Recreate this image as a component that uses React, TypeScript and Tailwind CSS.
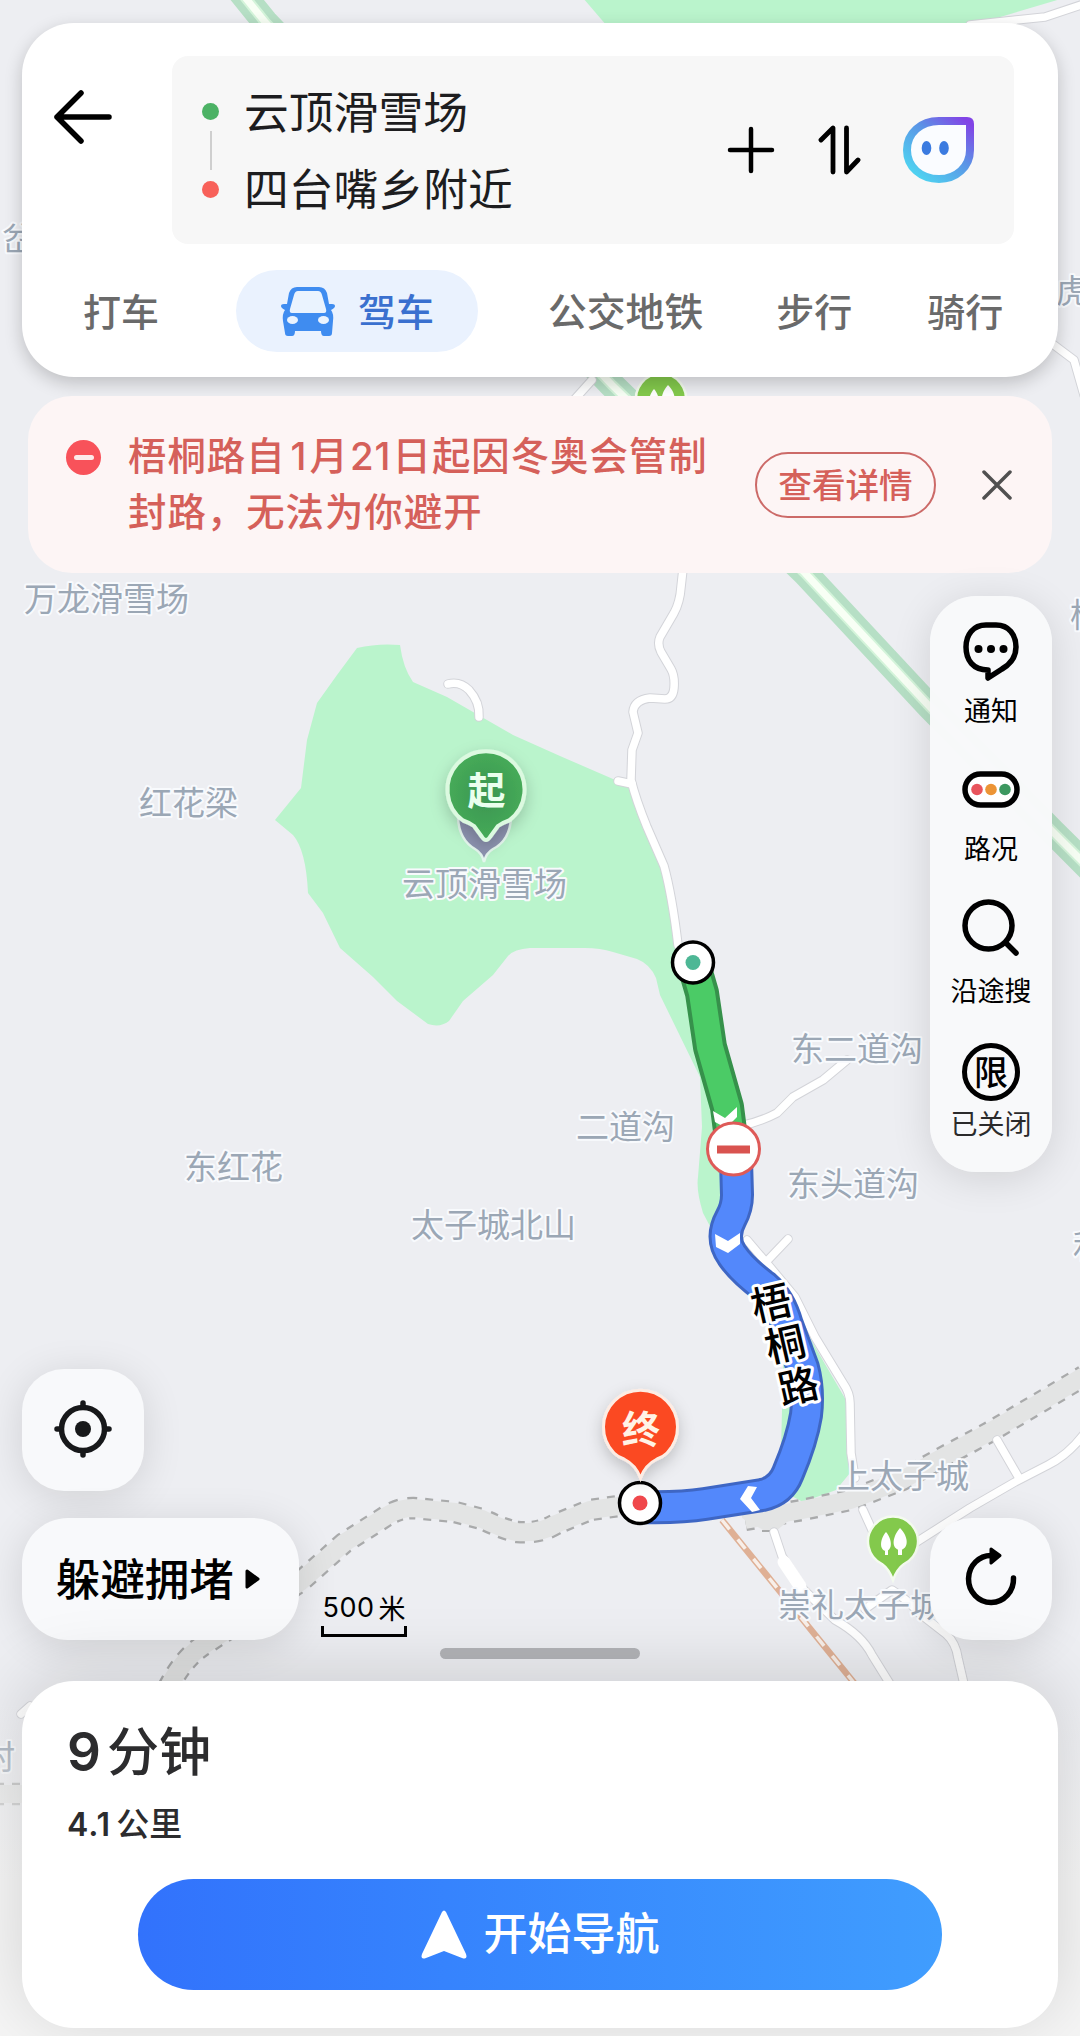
const mapLabels = [
  { text: "岔", x: 2, y: 251 },
  { text: "虎", x: 1056, y: 303 },
  { text: "万龙滑雪场", x: 24, y: 611 },
  { text: "梧", x: 1070, y: 627 },
  { text: "红花梁", x: 139, y: 815 },
  { text: "云顶滑雪场", x: 402, y: 896 },
  { text: "东二道沟", x: 791, y: 1061 },
  { text: "二道沟", x: 576, y: 1139 },
  { text: "东红花", x: 184, y: 1179 },
  { text: "东头道沟", x: 787, y: 1196 },
  { text: "太子城北山", x: 411, y: 1237 },
  { text: "利", x: 1073, y: 1258 },
  { text: "上太子城", x: 837, y: 1488 },
  { text: "崇礼太子城", x: 778, y: 1617 },
  { text: "村", x: -18, y: 1769 },
]

const roads = [
  "M684 560 L681 587 Q680 602 674 613 L660 637 Q657 644 661 652 L671 669 Q675 676 674 688 Q673 699 665 699 L650 698 Q634 700 633 712 L638 733 L632 750 L631 780 Q636 800 647 827 L664 866 Q672 895 678 945",
  "M448 684 Q460 681 469 690 Q480 702 479 717",
  "M618 781 L632 784",
  "M847 1060 L823 1080 L793 1097 L777 1113 Q760 1122 740 1126",
  "M747 1240 L770 1267 L795 1297 L815 1337 L843 1383 Q850 1393 850 1403 L851 1453 L855 1478",
  "M863 1510 L873 1532",
  "M788 1239 L767 1261",
  "M774 1532 L782 1556 L804 1590 L835 1620 Q862 1635 872 1655 L890 1684",
  "M1084 1434 Q1068 1455 1048 1465 L1015 1482 L970 1508 L915 1543",
  "M997 1440 L1019 1478",
  "M865 1609 L892 1590 Q908 1600 919 1613 L946 1634 Q956 1643 958 1658 L964 1684",
  "M970 25 L1045 17 L1084 4",
  "M1050 342 L1074 360 L1084 395",
  "M574 400 L592 380",
  "M21 1714 L30 1706",
]

const railway =
  "M168 1688 Q185 1655 207 1643 L300 1582 L344 1543 L388 1515 Q400 1508 413 1508 L455 1512 L482 1519 Q505 1530 517 1532 Q540 1534 556 1524 L590 1510 L640 1503 M745 1520 L802 1510 L850 1500 L902 1480 L943 1457 L988 1433 L1039 1403 L1084 1376 M-4 1794 H30"

const highway = "M236 -14 L265 22 L612 385 L805 573 L930 707 L1052 831 L1090 869"

const greenRoute = "M693 962 L702 993 L710 1047 L727 1107 L735 1170"
const blueRoute =
  "M736 1160 L737 1195 Q737 1207 731 1218 Q720 1238 732 1255 Q742 1270 765 1287 Q780 1300 787 1325 L803 1368 Q809 1390 806 1415 Q802 1440 788 1473 Q781 1491 762 1495 L705 1504 Q680 1508 640 1507"

const ParkPin = ({ x, y }: { x: number; y: number }) => (
  <g transform={`translate(${x} ${y})`}>
    <path
      d="M0 39 Q-4 28 -11 23 A25 25 0 1 1 11 23 Q4 28 0 39Z"
      fill="#83c94c"
      stroke="#f4fbef"
      strokeWidth="2.5"
    />
    <path d="M-7 -9 C-1 -2 0 9 -7 10 C-14 9 -13 -2 -7 -9Z M-8 8 h3 v6 h-3z" fill="#fff" />
    <path d="M7 -13 C16 -4 16 8 7 9 C-2 8 -1 -4 7 -13Z M5 7 h4 v7 h-4z" fill="#fff" />
  </g>
)

const MapCanvas = () => (
  <svg
    className="absolute inset-0"
    width="1080"
    height="2036"
    viewBox="0 0 1080 2036"
    fill="none"
    fontFamily='"Noto Sans CJK SC", sans-serif'
  >
    <defs>
      <linearGradient id="fade" x1="0" y1="1700" x2="0" y2="1880" gradientUnits="userSpaceOnUse">
        <stop stopColor="#f5f5f5" stopOpacity="0" />
        <stop offset="1" stopColor="#f5f5f5" />
      </linearGradient>
      <radialGradient id="startPin">
        <stop stopColor="#3b9550" />
        <stop offset="1" stopColor="#46ab59" />
      </radialGradient>
      <filter id="pinShadow" x="-50%" y="-50%" width="200%" height="200%">
        <feDropShadow dx="0" dy="6" stdDeviation="8" floodOpacity="0.2" />
      </filter>
    </defs>
    <rect width="1080" height="2036" fill="#edeef2" />

    {/* Green areas */}
    <path d="M583 -2 L607 26 L970 26 L1064 -2Z" fill="#baf4cc" />
    <path
      d="M357 648 Q378 643 400 645 Q403 668 413 682 L447 697 L480 716 L513 735 L560 756 L613 779 L630 783 L640 813 L660 857 L677 930 L690 960 L735 1150 L735 1200 L712 1230 L703 1213 Q696 1190 698 1177 L702 1127 L700 1077 L660 995 L656 978 Q650 964 637 959 L613 952 Q600 948 585 948 L530 948 Q514 949 508 956 L493 975 L463 1001 L449 1021 Q440 1028 428 1024 L397 1001 L373 977 L340 948 L323 913 L308 893 Q306 850 293 835 L275 820 L301 788 L307 740 L317 703 L337 675Z"
      fill="#baf4cc"
    />
    <path d="M785 1290 L815 1347 L846 1400 L850 1473 L836 1490 L803 1502 L780 1490Z" fill="#baf4cc" />
    <path d="M790 1300 L813 1344 L808 1352 L790 1335Z" fill="#a9dbe6" />

    {/* Railway band */}
    <path d={railway} stroke="#a9aaab" strokeWidth="22.5" strokeDasharray="8 8" />
    <path d={railway} stroke="#e3e4e4" strokeWidth="18" />
    <path d="M742 1518 L765 1531 H776 L792 1518 L790 1506 L742 1506Z" fill="#e3e4e4" />
    <path d="M762 1531 H775" stroke="#a9aaab" strokeWidth="2" />

    {/* Highway */}
    <path d={highway} stroke="#b6dfc5" strokeWidth="26" />
    <path d={highway} stroke="#d4f4da" strokeWidth="11" />
    <path d={highway} stroke="#f8fff5" strokeWidth="7" />

    {/* Local roads */}
    <g strokeLinejoin="round" strokeLinecap="round">
      {roads.map((d) => (
        <path key={d} d={d} stroke="#d3d4d9" strokeWidth="9.5" />
      ))}
      {roads.map((d) => (
        <path key={d} d={d} stroke="#fff" strokeWidth="7.5" />
      ))}
      <path d="M784 1562 L800 1586" stroke="#fff" strokeWidth="13" />
    </g>
    <path d="M722 1520 L855 1684" stroke="#dfb095" strokeWidth="6.5" />
    <path d="M722 1520 L855 1684" stroke="#f8efe9" strokeWidth="3.5" strokeDasharray="12 13" />

    <ParkPin x={661} y={398} />
    <ParkPin x={893} y={1541} />

    {/* Place names */}
    <g
      fontSize="33"
      fill="#9ba7b5"
      stroke="#f8fafd"
      strokeWidth="4"
      strokeLinejoin="round"
      paintOrder="stroke"
    >
      {mapLabels.map((label) => (
        <text key={label.text} x={label.x} y={label.y}>
          {label.text}
        </text>
      ))}
    </g>

    {/* Route */}
    <g strokeLinejoin="round">
      <path d={greenRoute} stroke="#36914b" strokeWidth="34" />
      <path d={greenRoute} stroke="#4bcb66" strokeWidth="26" />
      <path d={blueRoute} stroke="#3e66c4" strokeWidth="34" />
      <path d={blueRoute} stroke="#5388fb" strokeWidth="28" />
    </g>
    <g fill="#fff">
      <path d="M713 1111 L725 1118 L737 1107 V1117 L726 1128 L715 1122Z" />
      <path d="M715 1234 L728 1241 L740 1233 V1244 L728 1253 L716 1247Z" />
      <path d="M748 1486 L757 1487 L751 1498 L760 1510 L752 1512 L740 1499Z" />
    </g>

    <g
      fontSize="40"
      fontWeight="500"
      fill="#000"
      stroke="#fff"
      strokeWidth="6"
      strokeLinejoin="round"
      paintOrder="stroke"
      textAnchor="middle"
    >
      <text transform="translate(771 1303) rotate(-13)" y="15">梧</text>
      <text transform="translate(785 1344) rotate(-13)" y="15">桐</text>
      <text transform="translate(798 1386) rotate(-13)" y="15">路</text>
    </g>

    {/* Route stops */}
    <circle cx="693" cy="962.5" r="20.5" fill="#fff" stroke="#000" strokeWidth="3.5" />
    <circle cx="693" cy="962.5" r="7.5" fill="#4db795" />
    <circle cx="640" cy="1503" r="20.5" fill="#fff" stroke="#000" strokeWidth="3.5" />
    <circle cx="640" cy="1503" r="7.5" fill="#f0474b" />
    <circle cx="733.5" cy="1149" r="26" fill="#fff" stroke="#de5a58" strokeWidth="3" />
    <path d="M717 1149.5 H750" stroke="#d9534f" strokeWidth="8" />

    {/* Start pin */}
    <path
      d="M458 818 C459 836 468 845 475 849 Q482 853 484 862 Q486 853 493 849 C501 845 510 836 511 818Z"
      fill="#8d93b0"
      stroke="#e4f7ee"
      strokeWidth="2.5"
    />
    <path
      d="M486 840 Q484 840 482 837 L474 826 Q470 823 463 820.500 A38.500 38.500 0 1 1 509 820.500 Q502 823 498 826 L490 837 Q488 840 486 840Z"
      fill="url(#startPin)"
      stroke="#dcf9e0"
      strokeWidth="4"
      filter="url(#pinShadow)"
    />
    <text x="486.5" y="804" fontSize="38" fontWeight="700" fill="#eaffee" textAnchor="middle">起</text>

    {/* End pin */}
    <path
      d="M640.500 1478 C637 1468 632 1463 624 1459 Q618 1457 614 1453 A37 37 0 1 1 667 1453 Q663 1457 657 1459 C649 1463 644 1468 640.500 1478Z"
      fill="#fb4820"
      stroke="#fdece3"
      strokeWidth="3"
      filter="url(#pinShadow)"
    />
    <text x="641" y="1443" fontSize="38" fontWeight="700" fill="#fff3e6" textAnchor="middle">终</text>

    <rect y="1700" width="1080" height="336" fill="url(#fade)" />
  </svg>
)

const BackIcon = () => (
  <svg width="60" height="56" viewBox="0 0 60 56" fill="none" stroke="#000" strokeWidth="5.5" strokeLinecap="round" strokeLinejoin="round">
    <path d="M28 4 L4 28 L28 52 M4 28 H56" />
  </svg>
)

const CarIcon = () => (
  <svg width="54" height="49" viewBox="0 0 54 49" fill="#3f8cf0">
    <path d="M16 0 H38 Q44 0 46 6 L48 17 H51 Q54 17 54 19 Q54 21 50 23 Q53 27 52 34 L51 46 Q51 49 48 49 H43 Q40 49 40 44 H14 Q14 49 11 49 H7 Q4 49 4 46 L2 34 Q1 27 4 23 Q0 21 0 19 Q0 17 3 17 H6 L8 6 Q10 0 16 0Z" />
    <path d="M17 4 H37 Q40 4 41 8 L45 22 Q46 26 43 26 H11 Q8 26 9 22 L13 8 Q14 4 17 4Z" fill="#eaf3fe" />
    <ellipse cx="11.500" cy="33" rx="5.500" ry="4" fill="#eaf3fe" />
    <ellipse cx="42.500" cy="33" rx="5.500" ry="4" fill="#eaf3fe" />
  </svg>
)

const AssistantIcon = () => (
  <svg width="72" height="66" viewBox="0 0 72 66" fill="none">
    <defs>
      <linearGradient id="assistant" x1="20" y1="62" x2="66" y2="6" gradientUnits="userSpaceOnUse">
        <stop stopColor="#4fd0f0" />
        <stop offset="0.55" stopColor="#5b93e6" />
        <stop offset="1" stopColor="#8244e6" />
      </linearGradient>
    </defs>
    <path
      d="M36 4 H64 Q67 4 67 7 V33 C67 50 53 62 36 62 C18 62 4 50 4 33 C4 16 18 4 36 4Z"
      fill="#fafcff"
      stroke="url(#assistant)"
      strokeWidth="8"
    />
    <ellipse cx="23.500" cy="31" rx="4.800" ry="7" fill="#3b7be0" />
    <ellipse cx="41" cy="31" rx="4.800" ry="7" fill="#3b7be0" />
  </svg>
)

const Header = () => (
  <header className="mx-[22px] mt-[23px] flex h-[354px] flex-col rounded-[52px] bg-white shadow-[0_6px_18px_rgba(0,0,0,0.2)]">
    <div className="flex pt-[33px] pr-[44px] pl-[31px]">
      <button className="mt-[33px] h-[56px] w-[119px]" aria-label="返回">
        <BackIcon />
      </button>
      <div className="flex h-[188px] flex-1 items-center rounded-2xl bg-[#f7f7f7] pr-[39px] pl-[30px]">
        <div className="flex flex-col items-center">
          <span className="size-[17px] rounded-full bg-[#4cb265]" />
          <span className="my-[11px] h-[39px] w-0.5 bg-[#cfcfcf]" />
          <span className="size-[17px] rounded-full bg-[#f8615a]" />
        </div>
        <div className="ml-[25px] flex-1 pb-[5px] text-[44.8px] leading-[77px] text-[#1d1d1f]">
          <div>云顶滑雪场</div>
          <div>四台嘴乡附近</div>
        </div>
        <div className="flex items-center">
          <svg width="48" height="48" viewBox="0 0 48 48" stroke="#000" strokeWidth="4.5" strokeLinecap="round">
            <path d="M3 24 H45 M24 3 V45" />
          </svg>
          <svg className="ml-[42px]" width="44" height="52" viewBox="0 0 44 52" fill="none" stroke="#000" strokeWidth="4.800" strokeLinecap="round" strokeLinejoin="round">
            <path d="M4 16 L16 4 V48 M29.500 4 V48 L41 36" />
          </svg>
          <div className="ml-[42px]">
            <AssistantIcon />
          </div>
        </div>
      </div>
    </div>
    <nav className="mt-[26px] flex h-[82px] items-center text-[38px] font-medium text-[#6a6a6a]">
      <span className="ml-[61px] pb-1">打车</span>
      <span className="ml-[77px] flex h-[82px] w-[242px] items-center rounded-full bg-[#eaf2fe] pl-[45px] text-[#3a70cf]">
        <CarIcon />
        <span className="ml-[23px] pb-1">驾车</span>
      </span>
      <span className="ml-[70px] pb-1 text-[38.8px]">公交地铁</span>
      <span className="ml-[73px] pb-1">步行</span>
      <span className="ml-[75px] pb-1">骑行</span>
    </nav>
  </header>
)

const ClosureBanner = () => (
  <section className="mx-[28px] mt-[19px] flex h-[177px] rounded-[44px] bg-[#fdf5f5] text-[#d5605a]">
    <div className="mt-[44px] ml-[38px] flex size-[35px] items-center justify-center rounded-full bg-[#f8525a]">
      <span className="h-[5px] w-[20px] rounded-sm bg-[#fdeaea]" />
    </div>
    <p className="mt-[32px] ml-[27px] w-[627px] font-['Inter','Noto_Sans_CJK_SC',sans-serif] text-[38.4px] leading-[56px] font-medium tracking-[1px]">
      梧桐路自<span className="mr-[2px] ml-[5px]">1</span>月<span className="mx-px">21</span>日起因冬奥会管制
      <br />
      封路，无法为你避开
    </p>
    <button className="mt-[56px] flex h-[66px] w-[181px] items-center justify-center rounded-full border-[2.5px] border-[#cc6a68] pb-px text-[33.6px] font-medium">
      查看详情
    </button>
    <svg className="mt-[74px] ml-[46px]" width="30" height="30" viewBox="0 0 30 30" stroke="#505050" strokeWidth="3.500" strokeLinecap="round">
      <path d="M2 2 L28 28 M28 2 L2 28" />
    </svg>
  </section>
)

const SidePanel = () => (
  <aside className="flex h-[576px] w-[122px] flex-col items-center rounded-[46px] bg-[#f8f9fa]/98 text-[27px] leading-[36px] text-black shadow-[0_6px_40px_rgba(0,0,0,0.12)]">
    <svg className="mt-[26px]" width="56" height="60" viewBox="0 0 56 60" fill="none">
      <path
        d="M23 3 H33 C46 3 53 13 53 25 C53 37 46 43 39 47 L25 56 V48 C10 48 3 38 3 25 C3 13 10 3 23 3Z"
        stroke="#000"
        strokeWidth="5.500"
        strokeLinejoin="round"
      />
      <circle cx="15.500" cy="27" r="4" fill="#000" />
      <circle cx="28" cy="27" r="4" fill="#000" />
      <circle cx="40.500" cy="27" r="4" fill="#000" />
    </svg>
    <span className="mt-[10px]">通知</span>
    <svg className="mt-[43px]" width="58" height="37" viewBox="0 0 58 37">
      <rect x="3" y="3" width="52" height="31" rx="15.500" fill="#fff" stroke="#000" strokeWidth="5.500" />
      <circle cx="15" cy="18.500" r="5.800" fill="#e8545c" />
      <circle cx="29" cy="18.500" r="5.800" fill="#ec9435" />
      <circle cx="43" cy="18.500" r="5.800" fill="#3d9860" />
    </svg>
    <span className="mt-[22px]">路况</span>
    <svg className="mt-[33px]" width="58" height="58" viewBox="0 0 58 58" fill="none" stroke="#000" strokeWidth="5.500" strokeLinecap="round">
      <circle cx="26.500" cy="26.500" r="23.500" />
      <path d="M44 44 L54 54" />
    </svg>
    <span className="mt-[15px]">沿途搜</span>
    <span className="mt-[35px] flex size-[58px] items-center justify-center rounded-full border-[5px] border-black pb-0.5 text-[34px] font-medium">
      限
    </span>
    <span className="mt-[4px] text-[#2b2b2b]">已关闭</span>
  </aside>
)

const MapControls = () => (
  <div className="flex h-[1067px] justify-between pr-[28px] pl-[22px]">
    <div className="flex flex-col justify-end gap-[27px]">
      <button className="flex size-[122px] items-center justify-center rounded-[42px] bg-[#f8f9fb] pb-0.5 shadow-[0_6px_40px_rgba(0,0,0,0.12)]" aria-label="定位">
        <svg width="60" height="60" viewBox="0 0 60 60" fill="none" stroke="#17181a" strokeWidth="5.500" strokeLinecap="round">
          <circle cx="30" cy="30" r="21.500" />
          <path d="M30 4 V8 M30 52 V56 M4 30 H8 M52 30 H56" />
          <circle cx="30" cy="30" r="8" fill="#17181a" stroke="none" />
        </svg>
      </button>
      <div className="flex items-end">
        <button className="flex h-[122px] w-[277px] items-center rounded-[46px] bg-[#f8f9fb] pl-[34px] text-[44.4px] font-medium text-black shadow-[0_6px_40px_rgba(0,0,0,0.12)]">
          <span className="pb-1">躲避拥堵</span>
          <svg className="ml-[11px]" width="15" height="20" viewBox="0 0 15 20">
            <path d="M2 2 L13 10 L2 18Z" stroke="#000" strokeWidth="3" strokeLinejoin="round" />
          </svg>
        </button>
        <div className="mb-[3px] ml-[22px] w-[86px] text-center text-black">
          <div className="flex items-center justify-center leading-[36px]">
            <span className="mr-1 font-['Inter',sans-serif] text-[27px] tracking-[0.5px]">500</span>
            <span className="text-[27px]">米</span>
          </div>
          <div className="h-[11px] border-x-[3px] border-b-[3px] border-black" />
        </div>
      </div>
    </div>
    <div className="flex flex-col justify-between pt-[23px]">
      <SidePanel />
      <button className="flex size-[122px] items-center justify-center rounded-[42px] bg-[#f8f9fb] pb-1 shadow-[0_6px_40px_rgba(0,0,0,0.12)]" aria-label="刷新">
        <svg width="56" height="60" viewBox="0 0 56 60" fill="none" stroke="#000" strokeWidth="5.500" strokeLinecap="round">
          <path d="M50.500 31 A22.500 23.500 0 1 1 29 8.500" />
          <path d="M28 2 L37 8.500 L28 16Z" fill="#000" strokeWidth="3" strokeLinejoin="round" />
        </svg>
      </button>
    </div>
  </div>
)

const RouteSheet = () => (
  <footer className="mx-[22px] h-[347px] rounded-[52px] bg-white font-['Inter','Noto_Sans_CJK_SC',sans-serif] text-[#2c2c2e] shadow-[0_-8px_70px_rgba(0,0,0,0.14)]">
    <div className="flex items-baseline pt-[39px] pl-[45px] text-[52px] leading-[64px] font-medium">
      <span className="mr-[6px] text-[53px] font-semibold">9</span>分钟
    </div>
    <div className="mt-[19px] flex items-baseline pl-[45px] text-[33px] leading-[40px] font-medium">
      <span className="mr-[5px] text-[32px] font-semibold tracking-[1px]">4.1</span>公里
    </div>
    <button className="mx-auto mt-[34px] flex h-[111px] w-[804px] items-center justify-center rounded-full bg-linear-to-r from-[#3272fc] to-[#409dfe] text-[44px] font-medium text-white">
      <svg width="46" height="50" viewBox="0 0 46 50" fill="#fff">
        <path d="M21 2 Q23 -1 25 2 L45 44 Q47 50 41 48 L23 41 L5 48 Q-1 50 1 44Z" />
      </svg>
      <span className="ml-[17px] pb-px">开始导航</span>
    </button>
  </footer>
)

export default function App() {
  return (
    <div className="relative h-[2036px] w-[1080px] overflow-hidden bg-[#f5f5f5] font-['Noto_Sans_CJK_SC',sans-serif]">
      <MapCanvas />
      <div className="relative flex h-full flex-col">
        <Header />
        <ClosureBanner />
        <MapControls />
        <div className="flex h-[41px] justify-center pt-[8px]">
          <div className="h-[11px] w-[200px] rounded-full bg-[#b2b3b7]" />
        </div>
        <RouteSheet />
      </div>
    </div>
  )
}
